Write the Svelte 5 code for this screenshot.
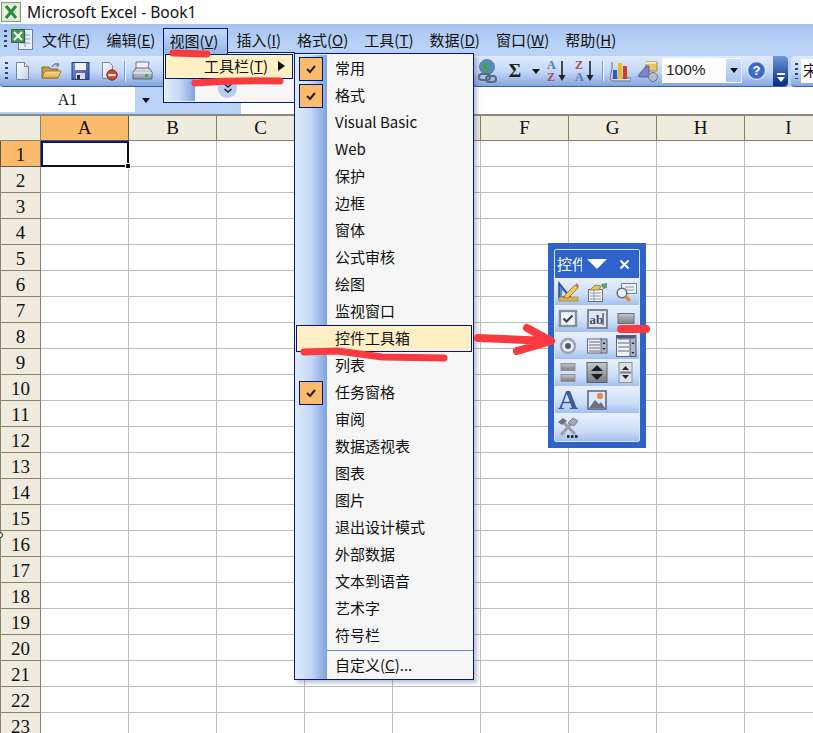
<script>
  const columns = ["A", "B", "C", "D", "E", "F", "G", "H", "I"];
  const rows = Array.from({ length: 23 }, (_, i) => i + 1);
  const menus = [
    ["文件", "F"],
    ["编辑", "E"],
    ["视图", "V"],
    ["插入", "I"],
    ["格式", "O"],
    ["工具", "T"],
    ["数据", "D"],
    ["窗口", "W"],
    ["帮助", "H"],
  ];
  const toolbars = [
    { label: "常用", checked: true },
    { label: "格式", checked: true },
    { label: "Visual Basic" },
    { label: "Web" },
    { label: "保护" },
    { label: "边框" },
    { label: "窗体" },
    { label: "公式审核" },
    { label: "绘图" },
    { label: "监视窗口" },
    { label: "控件工具箱", active: true },
    { label: "列表" },
    { label: "任务窗格", checked: true },
    { label: "审阅" },
    { label: "数据透视表" },
    { label: "图表" },
    { label: "图片" },
    { label: "退出设计模式" },
    { label: "外部数据" },
    { label: "文本到语音" },
    { label: "艺术字" },
    { label: "符号栏" },
  ];
</script>

<div class="window">
  <svg class="defs" width="0" height="0">
    <defs>
      <linearGradient id="paper" x1="0" y1="0" x2="1" y2="1"><stop offset="0" stop-color="#fff" /><stop offset="1" stop-color="#c3cfe4" /></linearGradient>
      <linearGradient id="folder" x1="0" y1="0" x2="0" y2="1"><stop offset="0" stop-color="#fbe79c" /><stop offset="1" stop-color="#e0a63c" /></linearGradient>
      <linearGradient id="disk" x1="0" y1="0" x2="1" y2="1"><stop offset="0" stop-color="#7f92dc" /><stop offset="1" stop-color="#39479c" /></linearGradient>
      <linearGradient id="metal" x1="0" y1="0" x2="0" y2="1"><stop offset="0" stop-color="#dfe3ea" /><stop offset="1" stop-color="#8b93a3" /></linearGradient>
      <linearGradient id="dark" x1="0" y1="0" x2="0" y2="1"><stop offset="0" stop-color="#c4c7cc" /><stop offset="1" stop-color="#797d85" /></linearGradient>
    </defs>
  </svg>

  <header class="title">
    <svg width="20" height="20" viewBox="0 0 20 20">
      <rect x="0.500" y="0.500" width="19" height="19" fill="#dfe8d6" stroke="#7d9a78" />
      <rect x="3" y="3" width="14" height="14" fill="#e9f1e2" />
      <path d="M5 4l10 12M15 4L5 16" stroke="#268a3c" stroke-width="3" />
    </svg>
    <span>Microsoft Excel - Book1</span>
  </header>

  <nav class="menubar">
    <span class="grip"></span>
    <svg class="doc" width="24" height="26" viewBox="0 0 24 26">
      <rect x="8.500" y="3.500" width="14" height="20" fill="#e9eef6" stroke="#6d7f9c" />
      <path d="M11 9h9M11 13h9M11 17h9M15 6v15" stroke="#8b9cb8" />
      <rect x="1.500" y="3.500" width="13" height="13" fill="#3c9a4a" stroke="#38633c" />
      <path d="M4 6l8 8M12 6l-8 8" stroke="#fff" stroke-width="2" />
    </svg>
    {#each menus as [name, key]}
      <span class="menu" class:open={key === "V"}>{name}(<u>{key}</u>)</span>
    {/each}
  </nav>

  <div class="toolbars">
    <div class="toolbar">
      <span class="grip"></span>
      <div class="left-tools">
        <svg width="18" height="20" viewBox="0 0 18 20"><path d="M3.500 1.500h8l4 4v13h-12z" fill="url(#paper)" stroke="#77849c" /><path d="M11.500 1.500v4h4" fill="#e6ebf4" stroke="#77849c" /></svg>
        <svg width="22" height="20" viewBox="0 0 22 20"><path d="M2 6h7l2 2h7v9H2z" fill="#c79a42" stroke="#86682a" /><path d="M5 10h16l-3 7H2z" fill="url(#folder)" stroke="#9a7a30" /><path d="M12 6q3-5 7-2" fill="none" stroke="#7489ab" stroke-width="1.800" /><path d="M19 1.500v4h-4" fill="#7489ab" /></svg>
        <svg width="19" height="20" viewBox="0 0 19 20"><rect x="1" y="1.500" width="17" height="17" fill="url(#disk)" stroke="#2c3d80" /><rect x="4" y="2" width="11" height="7" fill="#eef2fb" /><rect x="5" y="12" width="9" height="6" fill="#d6dbe6" /><rect x="6" y="14" width="3" height="4" fill="#333" /></svg>
        <svg width="20" height="20" viewBox="0 0 20 20"><path d="M3.500 1.500h7l3 3v5l-5 8h-5z" fill="url(#paper)" stroke="#77849c" /><circle cx="13" cy="14" r="5.200" fill="#d8402c" stroke="#8d2a1c" /><rect x="9.500" y="13" width="7" height="2.200" fill="#fff" /></svg>
      </div>
      <i class="sep"></i>
      <svg class="printer" width="24" height="22" viewBox="0 0 24 22"><path d="M6 2h13l-1 7H6z" fill="#eef1f6" stroke="#6f7a8c" /><path d="M3 12l3-4h13l3 4v7H3z" fill="url(#metal)" stroke="#5c6676" /><path d="M3 13h19" stroke="#f2f4f8" /><rect x="15" y="14" width="3" height="3" fill="#2fb84a" /></svg>
      <div class="right-tools">
        <svg width="24" height="26" viewBox="0 0 24 26"><circle cx="13" cy="9" r="7.500" fill="#4f8fc8" stroke="#5c7ea2" /><path d="M9 3.500q5 1 4 4t4 3l-3 4q-5-2-5-5z" fill="#4f9d4a" /><path d="M5 19a3 3 0 0 1 3-3h5a3 3 0 0 1 0 6H8a3 3 0 0 1-3-3zM12 21a3 3 0 0 1 3-3h4a3 3 0 0 1 0 6h-4a3 3 0 0 1-3-3z" fill="none" stroke="#5a6a80" stroke-width="2" /></svg>
        <span class="sigma">Σ</span>
        <span class="caret"></span>
        <svg class="sort" width="22" height="26" viewBox="0 0 22 26"><text x="1" y="11" class="az blue">A</text><text x="1" y="23" class="az red">Z</text><path d="M16 3v17" stroke="#222" stroke-width="1.600" /><path d="M12.500 17h7l-3.500 6z" fill="#222" /></svg>
        <svg class="sort" width="22" height="26" viewBox="0 0 22 26"><text x="1" y="11" class="az red">Z</text><text x="1" y="23" class="az blue">A</text><path d="M16 3v17" stroke="#222" stroke-width="1.600" /><path d="M12.500 17h7l-3.500 6z" fill="#222" /></svg>
        <i class="sep"></i>
        <svg width="22" height="24" viewBox="0 0 22 24"><path d="M3 3v6L1 20l3 2h18v-3H3" fill="#d4d9e2" stroke="#6c7486" /><rect x="4" y="11" width="4" height="9" fill="#2f58c8" /><rect x="9" y="4" width="4" height="16" fill="#e8b830" /><rect x="14" y="7" width="4" height="13" fill="#d0401f" /></svg>
        <svg width="22" height="24" viewBox="0 0 22 24"><path d="M9 3h11v9H9z" fill="#e6c66a" stroke="#a48a3c" /><path d="M7 5l2-2h11l-2 2z" fill="#f6e6a8" /><path d="M1 17L9 7h3v11H2z" fill="#7d85c8" stroke="#59609c" /><circle cx="16" cy="18" r="4.500" fill="#b4bcc8" stroke="#6b7690" /></svg>
        <div class="zoombox">
          <span>100%</span>
          <b><i class="caret"></i></b>
        </div>
        <span class="help">?</span>
      </div>
      <span class="overflow"><i></i><i class="caret tiny"></i></span>
    </div>
    <div class="toolbar font-bar">
      <span class="grip"></span>
      <div class="font-box">宋</div>
    </div>
  </div>

  <div class="formula">
    <div class="namebox">A1</div>
    <span class="caret"></span>
  </div>

  <div class="sheet">
    <div class="corner"></div>
    {#each columns as col}
      <div class="colhead" class:current={col === "A"}>{col}</div>
    {/each}
    {#each rows as row}
      <div class="rowhead" class:current={row === 1}>{row}</div>
      {#each columns as col}
        <div class="cell" class:selected={row === 1 && col === "A"}></div>
      {/each}
    {/each}
  </div>

  <!-- open menus float over the sheet -->
  <div class="submenu">
    <div class="sub-item">工具栏(<u>T</u>)<i class="arrow"></i></div>
    <div class="sub-more">
      <span class="strip"></span>
      <span class="more-btn">
        <svg width="10" height="12" viewBox="0 0 10 12"><path d="M1.500 1l3.500 3 3.500-3M1.500 6l3.500 3 3.500-3" fill="none" stroke="#222" stroke-width="1.600" /></svg>
      </span>
    </div>
  </div>

  <div class="dropdown">
    {#each toolbars as item}
      <div class="item" class:active={item.active}>
        <span class="check-slot">
          {#if item.checked}
            <span class="check">
              <svg width="12" height="10" viewBox="0 0 12 10"><path d="M2 5l3 3 5-6" fill="none" stroke="#222" stroke-width="2" /></svg>
            </span>
          {/if}
        </span>
        <span class="label">{item.label}</span>
      </div>
    {/each}
    <div class="divider"><span class="strip"></span><i></i></div>
    <div class="item last">
      <span class="check-slot"></span>
      <span class="label">自定义(<u>C</u>)...</span>
    </div>
  </div>

  <div class="palette">
    <div class="palette-inner">
      <div class="palette-title">
        <span class="palette-name">控件</span>
        <i class="tri"></i>
        <svg width="11" height="11" viewBox="0 0 11 11"><path d="M1.500 1.500l8 8M9.500 1.500l-8 8" stroke="#fff" stroke-width="2" /></svg>
      </div>
      <div class="tool-row">
        <svg viewBox="0 0 22 22"><path d="M2 2v15h12z" fill="#5b86d8" stroke="#234a9c" stroke-width="1.500" /><path d="M5 9v6h6z" fill="#cfe0f8" /><rect x="2" y="16" width="19" height="4" fill="#d9b64c" stroke="#8d7228" stroke-width="0.600" /><path d="M8 14L18 4l3 3-10 10H7z" fill="#eec85c" stroke="#8d6c22" stroke-width="0.800" /><path d="M18 4l2-2 2 3-1 2z" fill="#d86868" /></svg>
        <svg viewBox="0 0 22 22"><rect x="2.500" y="8.500" width="14" height="12" fill="#f4f6fa" stroke="#646f86" /><path d="M4 12h11M4 15h11M4 18h11M8 9v11" stroke="#8f9bb0" /><path d="M4 9l5-5 6 1-2 4H8z" fill="#e4c258" stroke="#8d7228" stroke-width="0.800" /><path d="M15 3l6-1v5l-4 1z" fill="#5da060" /></svg>
        <svg viewBox="0 0 22 22"><rect x="6.500" y="2.500" width="15" height="10" fill="#eef1f6" stroke="#77839c" /><path d="M10 6h9M12 9h7" stroke="#8d9ab0" /><circle cx="7" cy="12" r="4.800" fill="#eaf0fa" stroke="#5e6a80" stroke-width="1.500" /><path d="M10.500 15.500l4.500 4.500" stroke="#d8903c" stroke-width="3.200" /></svg>
      </div>
      <div class="tool-row">
        <svg viewBox="0 0 22 22"><rect x="3" y="3" width="16" height="15" fill="#f4f5f9" stroke="#858fa4" stroke-width="2.400" /><path d="M6.500 10.500l3 3 6-6" fill="none" stroke="#3a3f4a" stroke-width="2" /></svg>
        <svg viewBox="0 0 22 22"><rect x="2" y="2" width="19" height="18" fill="#dfe4ee" stroke="#747e94" stroke-width="1.800" /><text x="3.500" y="16" class="ab">ab</text><path d="M17 5v12" stroke="#5b6478" stroke-width="1.500" /></svg>
        <svg viewBox="0 0 22 22"><rect x="3" y="5.500" width="16" height="10" fill="url(#dark)" stroke="#6b707a" /></svg>
      </div>
      <div class="tool-row">
        <svg viewBox="0 0 22 22"><circle cx="11" cy="11" r="7" fill="#eceef4" stroke="#9aa2b4" stroke-width="2.500" /><circle cx="11" cy="11" r="3" fill="#4f5666" /></svg>
        <svg viewBox="0 0 22 22"><rect x="1.500" y="4" width="14" height="14" fill="#eef1f6" stroke="#5e6980" /><path d="M3 7h11M3 10h11M3 13h11M3 16h11" stroke="#667" /><rect x="15" y="4" width="6" height="14" fill="#aeb6c6" stroke="#5e6980" /><path d="M16.500 9l1.500-2 1.500 2zM16.500 13l1.500 2 1.500-2z" fill="#222" /></svg>
        <svg viewBox="0 0 22 22"><rect x="1.500" y="0.500" width="14" height="21" fill="#eef1f6" stroke="#5e6980" /><path d="M3 4h11M3 8h11M3 12h11M3 16h11" stroke="#667" /><rect x="15" y="0.500" width="6" height="21" fill="#aeb6c6" stroke="#4c5a78" /><rect x="1.500" y="0.500" width="19" height="3" fill="#4c5a78" /><path d="M16.500 9l1.500-2 1.500 2zM16.500 17l1.500 2 1.500-2z" fill="#222" /></svg>
      </div>
      <div class="tool-row">
        <svg viewBox="0 0 22 22"><rect x="4" y="1.500" width="14" height="7" fill="url(#dark)" stroke="#8b909a" /><rect x="4" y="12.500" width="14" height="7" fill="url(#dark)" stroke="#8b909a" /></svg>
        <svg viewBox="0 0 22 22"><rect x="1" y="0.500" width="20" height="20" fill="url(#dark)" stroke="#5f636b" /><path d="M5 9l6-6 6 6zM5 12l6 6 6-6z" fill="#1d1d22" /></svg>
        <svg viewBox="0 0 22 22"><rect x="4" y="0.500" width="13" height="20" fill="#dde0e6" stroke="#8b909b" /><path d="M7 8l3.500-4 3.500 4zM7 13l3.500 4 3.500-4z" fill="#26262c" /><rect x="5" y="9.500" width="11" height="2" fill="#777c86" /></svg>
      </div>
      <div class="tool-row">
        <span class="big-a">A</span>
        <svg viewBox="0 0 22 22"><rect x="2" y="2" width="18" height="18" fill="#dce8fa" stroke="#4a5878" stroke-width="1.400" /><circle cx="14" cy="7" r="3" fill="#e8863c" /><path d="M3 19l6-8 4 4 2-2 4 6z" fill="#6b7382" /></svg>
      </div>
      <div class="tool-row">
        <svg viewBox="0 0 22 22"><path d="M4 19L14 8M5 5l13 13" stroke="#9a9fa8" stroke-width="3" /><path d="M1 6l5-4 4 3-5 4z" fill="#6d727b" /><path d="M11 7l5-5 5 3-4 5z" fill="#a5aab3" stroke="#5d626a" stroke-width="0.700" /><path d="M10 20.500h2.500M14 20.500h2.500M18 20.500h2.500" stroke="#111" stroke-width="2.500" /></svg>
      </div>
    </div>
  </div>

  <svg class="scribbles" width="813" height="733" viewBox="0 0 813 733">
    <g fill="none" stroke="#f93b41" stroke-linecap="round" stroke-linejoin="round">
      <path d="M173 53l34 1" stroke-width="7" />
      <path d="M195 83q40-3 85-2" stroke-width="7" />
      <path d="M304 352l34-1 44 6 62 1" stroke-width="7" />
      <path d="M478 338l72 3M527 328l24 13-34 10" stroke-width="8" />
      <path d="M621 329h25" stroke-width="8" />
    </g>
    <circle cx="0" cy="535" r="2.500" fill="#fff" stroke="#111" />
  </svg>
</div>

<style>
  :global(body) {
    margin: 0;
    background: #fff;
  }

  .window {
    position: relative;
    width: 813px;
    height: 733px;
    overflow: hidden;
    font-family: "Noto Sans CJK SC", "Liberation Sans", sans-serif;
    font-size: 15px;
    color: #111;
  }

  .defs {
    display: block;
    height: 0;
  }

  .title {
    display: flex;
    align-items: center;
    gap: 6px;
    height: 24px;
    padding-left: 1px;
    background: #fff;
    font-family: "Noto Sans", "Open Sans", sans-serif;
    font-size: 15.600px;
  }

  .menubar {
    display: flex;
    align-items: center;
    height: 30px;
    padding-left: 4px;
    background: linear-gradient(#a5c3f1, #bad2f6 70%, #b9d2f7);
    box-sizing: border-box;
  }

  .grip {
    width: 3px;
    height: 18px;
    flex: none;
    background: repeating-linear-gradient(#33436b 0 2px, transparent 2px 5px);
  }

  .doc {
    margin-left: 3px;
    flex: none;
  }

  .menu {
    height: 26px;
    line-height: 23px;
    padding: 0 8px;
    box-sizing: border-box;
    white-space: nowrap;
    margin-top: 4px;
  }

  .menu.open {
    position: relative;
    z-index: 3;
    width: 65px;
    padding: 0 5px;
    background: linear-gradient(#c5daf9, #95b5e8);
    border: 1px solid #00187e;
    border-bottom: none;
  }

  .toolbars {
    display: flex;
    gap: 3px;
    height: 33px;
    padding-top: 2px;
    box-sizing: border-box;
    background: #bad2f6;
  }

  .toolbar {
    display: flex;
    align-items: center;
    width: 788px;
    flex: none;
    padding-left: 5px;
    box-sizing: border-box;
    background: linear-gradient(#dfeafc, #c5d9f8 50%, #84a6e0);
    border-bottom: 1px solid #3b5fa8;
    border-radius: 4px 0 4px 4px;
  }

  .left-tools {
    display: flex;
    align-items: center;
    gap: 9px;
    margin-left: 5px;
    width: 111px;
    flex: none;
  }

  .sep {
    width: 1px;
    height: 20px;
    flex: none;
    background: #7f9bc9;
    box-shadow: 1px 0 #f2f6fd;
  }

  .printer {
    margin-left: 5px;
    flex: none;
  }

  .right-tools {
    display: flex;
    align-items: center;
    margin-left: 320px;
    flex: none;
    gap: 6px;
  }

  .sigma {
    width: 14px;
    text-align: center;
    font: bold 19px "Liberation Serif", serif;
    color: #222;
    margin-left: 4px;
  }

  .right-tools > .caret {
    margin-left: 4px;
  }

  .caret {
    display: inline-block;
    width: 0;
    height: 0;
    border-left: 4.500px solid transparent;
    border-right: 4.500px solid transparent;
    border-top: 5px solid #111;
  }

  .az {
    font: bold 12px "Liberation Serif", serif;
  }

  .blue {
    fill: #5878b8;
  }

  .red {
    fill: #a84c58;
  }

  .zoombox {
    display: flex;
    align-items: center;
    justify-content: space-between;
    width: 80px;
    height: 25px;
    margin-bottom: 2px;
    background: #fff;
    font: 15.500px "Liberation Sans", sans-serif;
    padding-left: 4px;
    box-sizing: border-box;
    margin-left: -3px;
    color: #222;
    border-right: 1px solid #e8effb;
  }

  .zoombox b {
    display: flex;
    align-items: center;
    justify-content: center;
    width: 15px;
    height: 23px;
    background: linear-gradient(#d0e0f8, #a8c4ee);
  }

  .help {
    width: 15px;
    height: 15px;
    margin-right: 1px;
    margin-bottom: 2px;
    border-radius: 50%;
    border: 1px solid #5f86c8;
    background: radial-gradient(#4c80dc, #2a58b8);
    color: #fff;
    font: bold 13px/15px "Liberation Sans", sans-serif;
    text-align: center;
    box-shadow: 0 0 0 1px #e2ebfa;
  }

  .overflow {
    display: flex;
    flex-direction: column;
    align-items: center;
    justify-content: flex-end;
    gap: 2px;
    align-self: stretch;
    width: 15px;
    margin-left: auto;
    padding-bottom: 4px;
    box-sizing: border-box;
    background: linear-gradient(#6f97dd, #002a86);
    border-radius: 0 4px 4px 0;
  }

  .overflow i:first-child {
    width: 8px;
    height: 2px;
    background: #fff;
  }

  .caret.tiny {
    border-top-color: #fff;
  }

  .font-bar {
    width: 22px;
    padding-left: 4px;
    gap: 3px;
    border-radius: 4px 0 0 4px;
  }

  .font-bar .grip {
    height: 16px;
  }

  .font-box {
    background: #fff;
    height: 24px;
    line-height: 22px;
    padding-left: 2px;
    width: 30px;
    flex: none;
  }

  .formula {
    display: flex;
    align-items: center;
    height: 27px;
    background: linear-gradient(#fff 0 0) no-repeat 241px 0 / 572px 100%, #bad2f6;
  }

  .namebox {
    width: 135px;
    height: 25px;
    background: #fff;
    text-align: center;
    font: 16px/25px "Liberation Serif", serif;
    align-self: flex-start;
  }

  .formula .caret {
    margin-left: 7px;
  }

  .sheet {
    display: grid;
    grid-template-columns: 41px repeat(9, 88px);
    grid-template-rows: 25px;
    grid-auto-rows: 26px;
    border-top: 2px solid #8a8a7e;
    font: 19px "Liberation Serif", serif;
  }

  .corner,
  .colhead,
  .rowhead {
    display: flex;
    align-items: center;
    justify-content: center;
    background: #efebde;
    box-sizing: border-box;
    border-right: 1px solid #85856e;
    border-bottom: 1px solid #85856e;
  }

  .rowhead {
    padding-top: 3px;
    border-left: 1px solid #85856e;
  }

  .current {
    background: #fcbb6c;
    border-color: #5a5a50;
  }

  .cell {
    box-sizing: border-box;
    border-right: 1px solid #bdbdbd;
    border-bottom: 1px solid #bdbdbd;
    background: #fff;
  }

  .cell.selected {
    position: relative;
    border: 2px solid #111;
    border-top-color: #00187e;
    border-left-color: #00187e;
  }

  .cell.selected::after {
    content: "";
    position: absolute;
    right: -4px;
    bottom: -4px;
    width: 6px;
    height: 6px;
    background: #111;
    border: 1px solid #fff;
    box-sizing: border-box;
  }

  .submenu {
    position: absolute;
    left: 163px;
    top: 52px;
    width: 132px;
    height: 51px;
    box-sizing: border-box;
    background: #f6f6f6;
    border: 1px solid #00187e;
    padding: 1px;
  }

  .sub-item {
    position: relative;
    z-index: 1;
    height: 25px;
    line-height: 22px;
    padding-left: 38px;
    box-sizing: border-box;
    background: #ffefc4;
    border: 1px solid #00187e;
    white-space: nowrap;
  }

  .arrow {
    position: absolute;
    right: 7px;
    top: 6px;
    border-left: 7px solid #111;
    border-top: 5.500px solid transparent;
    border-bottom: 5.500px solid transparent;
  }

  .sub-more {
    display: flex;
    height: 22px;
  }

  .strip {
    display: block;
    width: 30px;
    flex: none;
    background: linear-gradient(90deg, #e0ecfd, #c4d8f6 50%, #7fa3de);
  }

  .more-btn {
    display: flex;
    align-items: center;
    justify-content: center;
    width: 19px;
    height: 19px;
    margin-left: 23px;
    border-radius: 50%;
    background: #b4cdf2;
  }

  .dropdown {
    position: absolute;
    left: 294px;
    top: 53px;
    width: 180px;
    box-sizing: border-box;
    padding-top: 1px;
    background: #f6f6f6;
    border: 1px solid #00187e;
    box-shadow: 3px 3px 4px rgba(70, 80, 120, 0.35);
  }

  .item {
    display: flex;
    align-items: center;
    height: 27px;
    position: relative;
  }

  .check-slot {
    display: flex;
    align-items: center;
    justify-content: center;
    align-self: stretch;
    width: 32px;
    flex: none;
    background: linear-gradient(90deg, #e0ecfd, #c4d8f6 50%, #7fa3de);
  }

  .check {
    display: flex;
    align-items: center;
    justify-content: center;
    width: 24px;
    height: 24px;
    box-sizing: border-box;
    background: #fcbb6c;
    border: 1px solid #00187e;
  }

  .label {
    padding-left: 8px;
    margin-top: -3px;
    white-space: nowrap;
  }

  .item.active {
    z-index: 1;
  }

  .item.active .check-slot {
    background: transparent;
  }

  .item.active::before {
    content: "";
    position: absolute;
    inset: 0 1px 0 1px;
    background: #ffefc4;
    border: 1px solid #00187e;
  }

  .item.active .check-slot,
  .item.active .label {
    position: relative;
  }

  .divider {
    display: flex;
    height: 3px;
  }

  .divider i {
    flex: 1;
    height: 1px;
    margin-top: 1px;
    background: #6a86bd;
  }

  .divider .strip {
    width: 32px;
  }

  .palette {
    position: absolute;
    left: 548px;
    top: 243px;
    width: 98px;
    padding: 6px;
    box-sizing: border-box;
    background: #2f63ca;
  }

  .palette-inner {
    border: 1px solid #dbe6f8;
    border-radius: 2px;
  }

  .palette-title {
    display: flex;
    align-items: center;
    height: 28px;
    padding-left: 2px;
    color: #fff;
    background: #2f63ca;
  }

  .palette-name {
    width: 25px;
    overflow: hidden;
    white-space: nowrap;
    flex: none;
    line-height: 24px;
    height: 24px;
  }

  .tri {
    margin-left: 5px;
    margin-right: 12px;
    border-left: 10.500px solid transparent;
    border-right: 10.500px solid transparent;
    border-top: 10px solid #fff;
  }

  .tool-row {
    display: flex;
    align-items: center;
    height: 27px;
    padding-left: 2px;
    gap: 7px;
    background: linear-gradient(#e8f0fd, #cfdff9 60%, #a3c0ee);
    box-sizing: border-box;
  }

  .tool-row:last-child {
    height: 28px;
  }

  .tool-row > * {
    flex: none;
    width: 22px;
    height: 22px;
    filter: blur(0.3px);
  }

  .ab {
    font: bold 13px "Liberation Serif", serif;
    fill: #3f4656;
  }

  .big-a {
    font: bold 28px/22px "Liberation Serif", serif;
    color: #3c5ca4;
    text-align: center;
  }

  .scribbles {
    position: absolute;
    left: 0;
    top: 0;
    z-index: 5;
    pointer-events: none;
  }
</style>
